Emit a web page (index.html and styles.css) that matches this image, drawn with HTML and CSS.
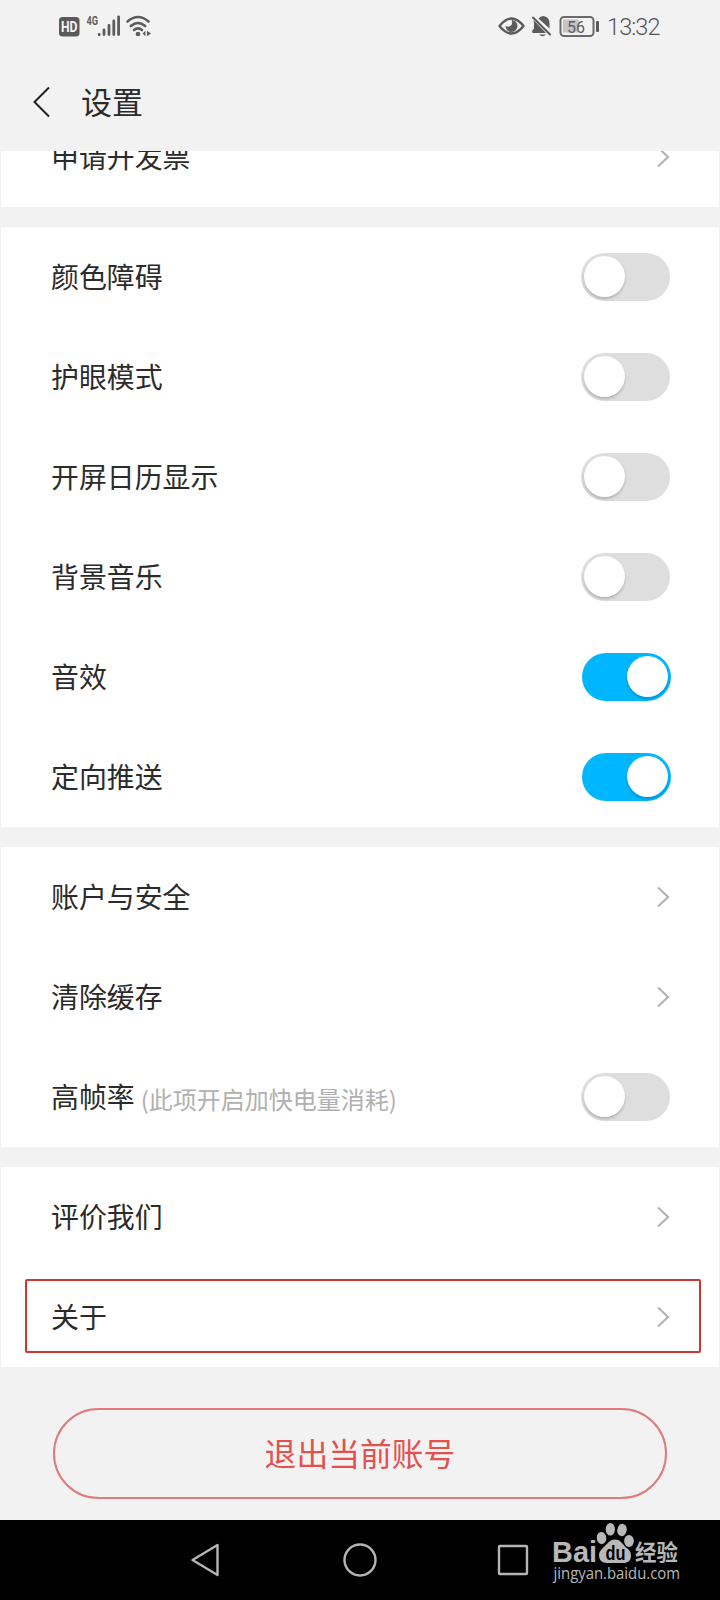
FILE: index.html
```html
<!DOCTYPE html>
<html lang="zh-CN">
<head>
<meta charset="utf-8">
<title>设置</title>
<link rel="stylesheet" href="styles.css">
</head>
<body>
<div class="screen">
  <div class="status">
    <svg class="status-left" width="100" height="60" viewBox="0 0 100 60">
      <rect x="9" y="17" width="20.500" height="19.500" rx="3.500" fill="#5a5a5a"/>
      <text class="hd" x="11" y="31.800" textLength="16.500" lengthAdjust="spacingAndGlyphs">HD</text>
      <text class="net" x="36.500" y="25.300" textLength="11.500" lengthAdjust="spacingAndGlyphs">4G</text>
      <g stroke="#5c5c5c" stroke-width="2.8" stroke-linecap="round">
        <path d="M49.200 34.400v.4M54 30v4.600M59 25.500v9.100M63.800 21v13.600M68.600 17v17.600"/>
      </g>
      <g fill="none" stroke="#5c5c5c" stroke-width="2.6" stroke-linecap="round">
        <path d="M77.500 21.500q10.500-9 21 0M80.800 26q7.200-6 14.400 0M84 30q4-3.300 8 0"/>
      </g>
      <circle cx="88" cy="34" r="2.300" fill="#5c5c5c"/>
      <path d="M92.500 33.500l3-2.700v5.400zM101 33.500l-4-2.700v5.400z" fill="#5c5c5c"/>
    </svg>
    <div class="status-right">
      <svg width="110" height="60" viewBox="0 0 110 60">
        <path d="M5.500 26q12-15 24 0q-12 15-24 0z" fill="none" stroke="#5a5a5a" stroke-width="2.400" stroke-linejoin="round"/>
        <path d="M17.500 20a6 6 0 1 1-6 6q3.500 1.500 5.500-.5t.5-5.500z" fill="#5a5a5a"/>
        <g fill="#5a5a5a" transform="translate(1.500)">
          <path d="M38 20L50.500 33H37l-.5-2 2-2.500v-5zM43 18.500q1.500-2.500 5-2.500 6.500 1.500 6 8v4.500z"/>
          <path d="M43.500 34.500h7q-3.500 3.500-7 0z"/>
          <path d="M37.500 17.500L54.500 34.500" stroke="#5a5a5a" stroke-width="2" stroke-linecap="round"/>
        </g>
        <rect x="69" y="19.500" width="15.500" height="13" fill="#c4c4c4"/>
        <rect x="66.500" y="17" width="33" height="19" rx="3.500" fill="none" stroke="#6a6a6a" stroke-width="2"/>
        <rect x="102" y="21" width="3" height="11" rx="1" fill="#5a5a5a"/>
        <text class="level" x="73" y="32.500" textLength="18" lengthAdjust="spacingAndGlyphs">56</text>
      </svg>
      <span class="time">13:32</span>
    </div>
  </div>
  <div class="header">
    <svg width="18" height="32" viewBox="0 0 18 32"><path d="M17 1.500L2.500 16 17 30.500" fill="none" stroke="#222" stroke-width="2"/></svg>
    <h1>设置</h1>
  </div>
  <div class="card clipped">
    <div class="row"><span>申请开发票</span><svg class="arrow" viewBox="0 0 14 22"><path d="M2 1.500L12 11 2 20.500"/></svg></div>
  </div>
  <div class="card">
    <div class="row"><span>颜色障碍</span><i class="toggle"></i></div>
    <div class="row"><span>护眼模式</span><i class="toggle"></i></div>
    <div class="row"><span>开屏日历显示</span><i class="toggle"></i></div>
    <div class="row"><span>背景音乐</span><i class="toggle"></i></div>
    <div class="row"><span>音效</span><i class="toggle on"></i></div>
    <div class="row"><span>定向推送</span><i class="toggle on"></i></div>
  </div>
  <div class="card">
    <div class="row"><span>账户与安全</span><svg class="arrow" viewBox="0 0 14 22"><path d="M2 1.500L12 11 2 20.500"/></svg></div>
    <div class="row"><span>清除缓存</span><svg class="arrow" viewBox="0 0 14 22"><path d="M2 1.500L12 11 2 20.500"/></svg></div>
    <div class="row"><span>高帧率<small>(此项开启加快电量消耗)</small></span><i class="toggle"></i></div>
  </div>
  <div class="card">
    <div class="row"><span>评价我们</span><svg class="arrow" viewBox="0 0 14 22"><path d="M2 1.500L12 11 2 20.500"/></svg></div>
    <div class="row marked"><span>关于</span><svg class="arrow" viewBox="0 0 14 22"><path d="M2 1.500L12 11 2 20.500"/></svg></div>
  </div>
  <div class="logout">退出当前账号</div>
  <div class="nav">
    <svg width="30" height="36" viewBox="0 0 30 36"><path d="M2.500 18L27.500 3v30z"/></svg>
    <svg width="36" height="36" viewBox="0 0 36 36"><circle cx="18" cy="18" r="15.500"/></svg>
    <svg width="32" height="32" viewBox="0 0 32 32"><rect x="2" y="2" width="28" height="28" rx="1"/></svg>
    <svg class="watermark" width="140" height="70" viewBox="0 0 140 70">
      <text class="bai" x="1" y="42.300" textLength="45" lengthAdjust="spacingAndGlyphs">Bai</text>
      <ellipse cx="50.500" cy="18" rx="4.800" ry="6" transform="rotate(-8 50.500 18)"/>
      <ellipse cx="59.300" cy="9.300" rx="4.600" ry="6.300"/>
      <ellipse cx="71" cy="10" rx="4.700" ry="6.200" transform="rotate(10 71 10)"/>
      <ellipse cx="78" cy="21" rx="4.900" ry="6"/>
      <path d="M64 19.500c5 0 7 3.500 9.500 6.500s6.500 4 6.500 9.500-3 7.500-8 7.500H56c-5 0-8-3-8-7.500s3-6.500 6-9.500 5-6.500 10-6.500z"/>
      <text class="du" x="54.500" y="39.500" textLength="20" lengthAdjust="spacingAndGlyphs">du</text>
      <text class="exp" x="84" y="39.500" textLength="43" lengthAdjust="spacingAndGlyphs">经验</text>
      <text class="url" x="2.500" y="59" textLength="126.500" lengthAdjust="spacingAndGlyphs">jingyan.baidu.com</text>
    </svg>
  </div>
</div>
</body>
</html>
```
FILE: styles.css
```css
* { box-sizing: border-box; }
body { margin: 0; background: #f2f2f2; font-family: "Noto Sans CJK SC", sans-serif; color: #2b2b2b; }
.screen { width: 720px; height: 1600px; display: flex; flex-direction: column; overflow: hidden; }
.status { height: 60px; display: flex; justify-content: space-between; padding: 0 59px 0 50px; }
.status-left { overflow: visible; }
.status-right { display: flex; }
.time { font: 300 23.5px/55px Roboto, sans-serif; color: #555; width: 54px; margin-left: 3px; white-space: nowrap; letter-spacing: -0.9px; }
.hd { font: 700 14px Roboto, sans-serif; fill: #f5f5f5; }
.net { font: 700 13px Roboto, sans-serif; fill: #5c5c5c; }
.level { font: 400 17px Roboto, sans-serif; fill: #5f5f5f; }
.header { height: 91px; display: flex; align-items: center; gap: 31px; padding: 0 0 7px 32px; }
.header h1 { margin: 0; font-size: 31px; font-weight: 400; line-height: 40px; position: relative; top: -1px; }
.card { margin: 0 1px 20px; background: #fff; flex: none; }
.clipped { height: 56px; overflow: hidden; display: flex; flex-direction: column; justify-content: flex-end; }
.row { height: 100px; flex: none; display: flex; align-items: center; justify-content: space-between; padding: 0 49px 0 50px; font-size: 27.9px; line-height: 40px; position: relative; }
.row > span { padding-bottom: 3px; }
.row small { font-size: 24px; color: #b0b0b0; margin-left: 6px; line-height: 1; position: relative; top: 1px; }
.arrow { width: 14px; height: 22px; fill: none; stroke: #b4b4b4; stroke-width: 2.2; }
.toggle { width: 89px; height: 48px; border-radius: 24px; background: #dedede; padding: 3px; display: flex; }
.toggle::before { content: ""; width: 41px; height: 41px; border-radius: 50%; background: #fff; box-shadow: 0 2px 3px rgba(0,0,0,.2); }
.toggle.on { background: #00b7ff; justify-content: flex-end; margin-right: -1px; }
.marked::after { content: ""; position: absolute; left: 24px; right: 18px; top: 12px; bottom: 14px; border: 2px solid #cc3732; border-radius: 2px; }
.logout { width: 614px; height: 91px; flex: none; margin: 21px 0 0 53px; border: 2px solid #e07a7b; border-radius: 46px; color: #e4504e; font-size: 31.8px; line-height: 85px; text-align: center; }
.nav { height: 80px; flex: none; margin-top: auto; background: #000; position: relative; display: flex; align-items: center; padding-left: 190px; }
.nav > svg { fill: none; stroke: #b5b5b5; stroke-width: 2.4; stroke-linejoin: round; }
.nav > svg:nth-child(2) { margin-left: 122px; }
.nav > svg:nth-child(3) { margin-left: 119px; }
.nav > .watermark { position: absolute; left: 551px; top: 0; fill: #b8b8b8; stroke: none; }
.bai { font: 700 29px "Liberation Sans", sans-serif; }
.du { font: 700 20px "Liberation Sans", sans-serif; fill: #000; }
.exp { font: 700 22px "Noto Sans CJK SC", sans-serif; }
.url { font: 400 16px "Open Sans", sans-serif; }
```
